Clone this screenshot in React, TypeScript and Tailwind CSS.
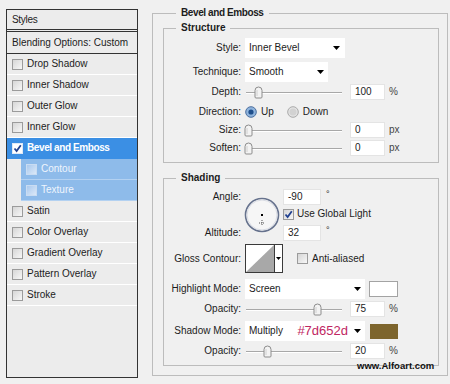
import clsx from 'clsx';

type Item = { name: string; sel?: boolean; sub?: boolean };

const items: Item[] = [
  { name: 'Drop Shadow' },
  { name: 'Inner Shadow' },
  { name: 'Outer Glow' },
  { name: 'Inner Glow' },
  { name: 'Bevel and Emboss', sel: true },
  { name: 'Contour', sub: true },
  { name: 'Texture', sub: true },
  { name: 'Satin' },
  { name: 'Color Overlay' },
  { name: 'Gradient Overlay' },
  { name: 'Pattern Overlay' },
  { name: 'Stroke' },
];

function Tick() {
  return (
    <svg width="9" height="9" viewBox="0 0 9 9">
      <path d="M1.5 4.5 L3.6 7 L7.8 1.2" fill="none" stroke="#21408f" strokeWidth="1.8" />
    </svg>
  );
}

function Check({ on, sub, sel }: { on?: boolean; sub?: boolean; sel?: boolean }) {
  return (
    <span
      className={clsx(
        'w-[11px] h-[11px] border flex items-center justify-center shrink-0',
        sel && 'bg-white border-[#dfe9f6]',
        sub && 'border-[#c9dcf2] bg-gradient-to-br from-[#a9c9ee] to-[#dbe8f7]',
        !sel && !sub && 'border-[#9b9b9b] bg-gradient-to-br from-[#d6d6d6] to-[#f7f7f7]'
      )}
    >
      {on && <Tick />}
    </span>
  );
}

function Arrow() {
  return (
    <svg width="7" height="4" viewBox="0 0 7 4" className="shrink-0">
      <path d="M0 0 H7 L3.5 4 Z" fill="#000" />
    </svg>
  );
}

function Drop({ w, text, pr = 'pr-[4px]', children }: { w: string; text: string; pr?: string; children?: React.ReactNode }) {
  return (
    <div className={clsx('h-[20px] bg-white flex items-center justify-between pl-[4px]', w, pr)}>
      <span>{text}</span>
      {children}
      <Arrow />
    </div>
  );
}

function Slider({ pos }: { pos: number }) {
  return (
    <div className="relative w-[96px] h-[16px] ml-[1px] shrink-0">
      <div className="absolute left-0 right-0 top-[8px] h-[1px] bg-[#a8a8a8] shadow-[0_1px_0_#ffffff]" />
      <svg className="absolute top-[2px]" style={{ left: pos }} width="9" height="13" viewBox="0 0 9 13">
        <path
          d="M1 4.5 Q1 1 4.5 1 Q8 1 8 4.5 V11 Q8 12 7 12 H2 Q1 12 1 11 Z"
          fill="#f3f3f3"
          stroke="#8c8c8c"
        />
        <path d="M3 4 V10" stroke="#d0d0d0" />
      </svg>
    </div>
  );
}

function Field({ v, w = 'w-[35px]' }: { v: string; w?: string }) {
  return (
    <div className={clsx('h-[16px] bg-white border border-[#e4e4e4] flex items-center pl-[4px]', w)}>{v}</div>
  );
}

function SliderRow({ pos, v, unit }: { pos: number; v: string; unit: string }) {
  return (
    <div className="flex items-center">
      <Slider pos={pos} />
      <div className="ml-[8px]">
        <Field v={v} />
      </div>
      <span className="ml-[4px] text-[#444]">{unit}</span>
    </div>
  );
}

function Row({ label, h = 'h-[16px]', mt, children }: { label: string; h?: string; mt?: string; children: React.ReactNode }) {
  return (
    <div className={clsx('flex items-center', h, mt)}>
      <span className="w-[77px] text-right shrink-0">{label}</span>
      <div className="ml-[4px] flex items-center">{children}</div>
    </div>
  );
}

function Radio({ on }: { on?: boolean }) {
  return on ? (
    <svg width="12" height="12" viewBox="0 0 12 12">
      <circle cx="6" cy="6" r="5.3" fill="#8fb4dd" stroke="#4c6f9e" />
      <circle cx="6" cy="6" r="2.6" fill="#1f4f8c" />
    </svg>
  ) : (
    <svg width="12" height="12" viewBox="0 0 12 12">
      <circle cx="6" cy="6" r="5.3" fill="#e3e3e3" stroke="#a9a9a9" />
      <circle cx="6" cy="6" r="3.5" fill="#d2d2d2" />
    </svg>
  );
}

function AngleDial() {
  return (
    <svg width="36" height="36" viewBox="0 0 36 36">
      <circle cx="18" cy="18" r="16.5" fill="#f6f6f6" stroke="#66728d" strokeWidth="1.6" />
      <circle cx="18" cy="18" r="15" fill="none" stroke="#d9dce4" />
      <rect x="17" y="17" width="2" height="2" fill="#000" />
      <path d="M18 23 V29 M15 26 H21" stroke="#555" strokeWidth="1" strokeDasharray="1 1" />
    </svg>
  );
}

function Contour() {
  return (
    <div className="w-[38px] h-[29px] border border-[#3a3a3a] bg-white flex">
      <svg width="28" height="27" viewBox="0 0 28 27">
        <polygon points="0,27 28,0 28,27" fill="#a8a8a8" />
      </svg>
      <div className="flex-1 border-l border-[#3a3a3a] flex items-center justify-center">
        <svg width="5" height="3" viewBox="0 0 5 3">
          <path d="M0 0 H5 L2.5 3 Z" fill="#000" />
        </svg>
      </div>
    </div>
  );
}

export default function App() {
  return (
    <div className="relative w-[450px] h-[384px] overflow-hidden bg-[#f0f0f0] flex items-start text-[10px] leading-[12px] text-[#1c1c1c] font-['Liberation_Sans',Arial,sans-serif]">
      {/* styles list */}
      <div className="ml-[6px] mt-[9px] w-[132px] h-[369px] border border-[#333] bg-[#ececec] flex flex-col">
        <div className="h-[20px] flex items-center pl-[5px] border-b border-[#333] tracking-[-0.3px]">Styles</div>
        <div className="mt-[1px] h-[23px] flex items-center pl-[5px] border-t border-b border-[#333]">
          Blending Options: Custom
        </div>
        {items.map((it) => (
          <div
            key={it.name}
            className={clsx(
              'h-[21px] flex items-center gap-[4px] pl-[5px] border-b',
              it.sel && 'bg-[#3b8fe4] text-white font-bold tracking-[-0.4px] border-[#3b8fe4]',
              it.sub && 'ml-[14px] bg-[#8ebbea] text-[#eef5fd] border-[#b3d1f1]',
              !it.sel && !it.sub && 'border-white'
            )}
          >
            <Check on={it.sel} sel={it.sel} sub={it.sub} />
            <span>{it.name}</span>
          </div>
        ))}
      </div>

      {/* settings */}
      <fieldset className="ml-[14px] mt-[7px] w-[296px] border border-[#bcbcbc] pl-[10px] pr-[8px] pb-[9px]">
        <legend className="ml-[13px] px-[5px] font-bold tracking-[-0.4px]">Bevel and Emboss</legend>

        <fieldset className="mt-[3px] border border-[#bcbcbc] pt-[4px] pb-[6px]">
          <legend className="ml-[12px] px-[5px] font-bold">Structure</legend>
          <Row label="Style:" h="h-[20px]">
            <Drop w="w-[100px]" text="Inner Bevel" pr="pr-[5px]" />
          </Row>
          <Row label="Technique:" h="h-[20px]" mt="mt-[4px]">
            <Drop w="w-[83px]" text="Smooth" />
          </Row>
          <Row label="Depth:" mt="mt-[2px]">
            <SliderRow pos={8} v="100" unit="%" />
          </Row>
          <Row label="Direction:" mt="mt-[4px]">
            <div className="flex items-center">
              <Radio on />
              <span className="ml-[4px]">Up</span>
              <span className="ml-[13px]">
                <Radio />
              </span>
              <span className="ml-[4px]">Down</span>
            </div>
          </Row>
          <Row label="Size:" mt="mt-[2px]">
            <SliderRow pos={-2} v="0" unit="px" />
          </Row>
          <Row label="Soften:" mt="mt-[2px]">
            <SliderRow pos={-2} v="0" unit="px" />
          </Row>
        </fieldset>

        <fieldset className="mt-[9px] border border-[#bcbcbc] pt-[5px] pb-[6px]">
          <legend className="ml-[12px] px-[5px] font-bold">Shading</legend>
          <div className="flex items-center">
            <div className="w-[77px] h-[52px] flex flex-col justify-between text-right shrink-0 py-[2px]">
              <span>Angle:</span>
              <span>Altitude:</span>
            </div>
            <div className="ml-[3px]">
              <AngleDial />
            </div>
            <div className="ml-[3px] flex flex-col">
              <div className="flex items-start">
                <Field v="-90" w="w-[38px]" />
                <span className="ml-[5px] text-[9px] leading-[10px]">°</span>
              </div>
              <div className="mt-[3px] flex items-center h-[12px]">
                <Check on />
                <span className="ml-[3px]">Use Global Light</span>
              </div>
              <div className="mt-[5px] flex items-start">
                <Field v="32" w="w-[38px]" />
                <span className="ml-[5px] text-[9px] leading-[10px]">°</span>
              </div>
            </div>
          </div>
          <Row label="Gloss Contour:" h="h-[29px]" mt="mt-[3px]">
            <Contour />
            <span className="ml-[14px]">
              <Check />
            </span>
            <span className="ml-[4px]">Anti-aliased</span>
          </Row>
          <Row label="Highlight Mode:" h="h-[20px]" mt="mt-[6px]">
            <Drop w="w-[120px]" text="Screen" />
            <div className="ml-[4px] w-[29px] h-[16px] bg-white border border-[#a3a3a3]" />
          </Row>
          <Row label="Opacity:" mt="mt-[2px]">
            <SliderRow pos={67} v="75" unit="%" />
          </Row>
          <Row label="Shadow Mode:" h="h-[20px]" mt="mt-[4px]">
            <Drop w="w-[120px]" text="Multiply">
              <span className="ml-auto mr-[6px] text-[13px] leading-[14px] text-[#bf2762]">#7d652d</span>
            </Drop>
            <div className="ml-[5px] w-[28px] h-[15px] bg-[#7d652d]" />
          </Row>
          <Row label="Opacity:" mt="mt-[2px]">
            <SliderRow pos={17} v="20" unit="%" />
          </Row>
        </fieldset>
      </fieldset>

      <span className="absolute left-[357px] top-[361px] font-bold text-[9.5px] leading-[10px] text-[#111]">
        www.Alfoart.com
      </span>
    </div>
  );
}
